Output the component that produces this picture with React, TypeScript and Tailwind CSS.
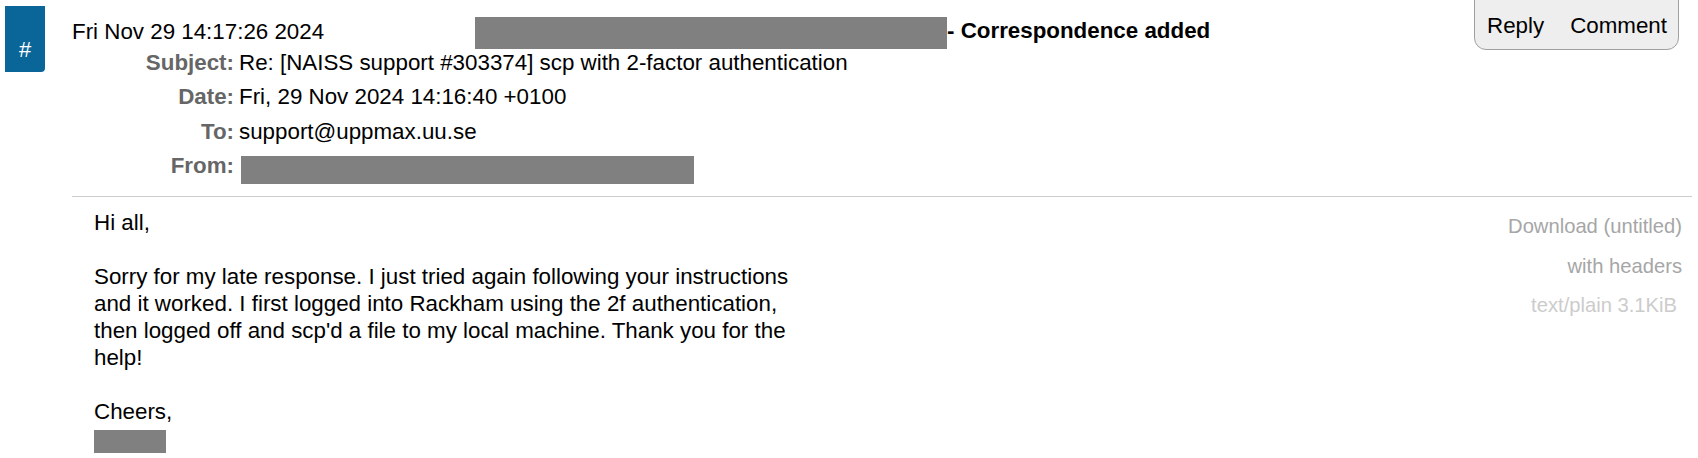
import React from "react";

export default function App() {
  const body = [
    "Hi all,",
    "",
    "Sorry for my late response. I just tried again following your instructions",
    "and it worked. I first logged into Rackham using the 2f authentication,",
    "then logged off and scp'd a file to my local machine. Thank you for the",
    "help!",
    "",
    "Cheers,",
  ];
  return (
    <div className="w-[1698px] h-[458px] overflow-hidden bg-white text-black font-['Liberation_Sans',Arial,sans-serif]">
      <div className="flex">
        <div className="w-[72px] shrink-0 pl-[5px] pt-[6px]">
          <div className="w-[40px] h-[66px] rounded-br-[4px] bg-[#0a6598] text-white text-[22px] leading-[27px] text-center pt-[30px]">
            #
          </div>
        </div>
        <div className="flex-1 min-w-0 pr-[6px] pt-[17px]">
          {/* header row */}
          <div className="flex items-start h-[29px] pr-[13px] text-[22.35px] leading-[27px]">
            <div className="w-[403px] shrink-0 mt-[1px]">Fri Nov 29 14:17:26 2024</div>
            <div className="w-[472px] h-[32px] shrink-0 bg-[#808080]" />
            <div className="font-bold">- Correspondence added</div>
            <div className="ml-auto -mt-[37px] flex gap-[26px] rounded-b-[12px] border border-[#a0a0a0] bg-[#eeeeee] pl-[12px] pr-[11px] pt-[31px] pb-[10px]">
              <span>Reply</span>
              <span>Comment</span>
            </div>
          </div>
          {/* header table */}
          <div className="grid grid-cols-[162px_1fr] gap-x-[5px] text-[22.35px] leading-[34.4px]">
            <div className="text-right font-bold text-[#666666]">Subject:</div>
            <div>Re: [NAISS support #303374] scp with 2-factor authentication</div>
            <div className="text-right font-bold text-[#666666]">Date:</div>
            <div>Fri, 29 Nov 2024 14:16:40 +0100</div>
            <div className="text-right font-bold text-[#666666]">To:</div>
            <div>support@uppmax.uu.se</div>
            <div className="text-right font-bold text-[#666666]">From:</div>
            <div className="pt-[7px]">
              <div className="ml-[2px] w-[453px] h-[28px] bg-[#808080]" />
            </div>
          </div>
          <div className="mt-[12px] border-t border-[#cccccc]" />
          {/* body */}
          <div className="flex">
            <div className="pl-[22px] pt-[12px] text-[22.35px] leading-[27px]">
              {body.map((l, i) => (
                <div key={i} className="h-[27px] whitespace-pre">
                  {l}
                </div>
              ))}
              <div className="mt-[5px] w-[72px] h-[23px] bg-[#808080]" />
            </div>
            <div className="ml-auto pr-[10px] pt-[10px] text-right text-[20.2px] leading-[39.4px]">
              <div className="text-[#a6a6a6]">Download (untitled)</div>
              <div className="text-[#a6a6a6]">with headers</div>
              <div className="mr-[5px] text-[#cccccc]">text/plain 3.1KiB</div>
            </div>
          </div>
        </div>
      </div>
    </div>
  );
}
